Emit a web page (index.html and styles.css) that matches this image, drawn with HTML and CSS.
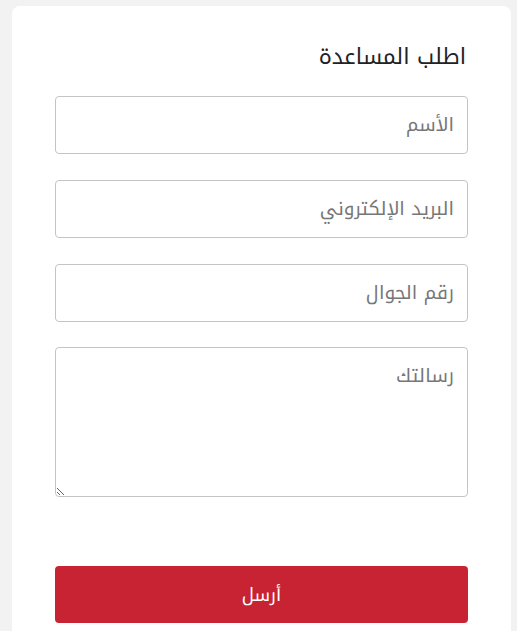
FILE: index.html
```html
<!DOCTYPE html>
<html lang="ar" dir="rtl">
<head>
<meta charset="utf-8">
<link rel="stylesheet" href="styles.css">
</head>
<body>
<div class="card">
  <h2 class="title">اطلب المساعدة</h2>
  <form class="form">
    <input class="field" type="text" dir="rtl" placeholder="الأسم">
    <input class="field" type="email" dir="rtl" placeholder="البريد الإلكتروني">
    <input class="field field-last" type="tel" dir="rtl" placeholder="رقم الجوال">
    <textarea class="field area" dir="rtl" placeholder="رسالتك"></textarea>
    <button class="submit" type="button">أرسل</button>
  </form>
</div>
</body>
</html>
```
FILE: styles.css
```css
html, body {
  margin: 0;
  padding: 0;
  background: #f2f2f2;
}
body {
  padding: 6px 6px 0 12px;
  font-family: "Noto Kufi Arabic", "Noto Sans Arabic", "Noto Sans", "DejaVu Sans", sans-serif;
  height: 631px;
  box-sizing: border-box;
  overflow: hidden;
}
.card {
  background: #fff;
  border-radius: 8px 8px 0 0;
  padding: 38px 45px 0 43px;
  height: 625px;
  box-sizing: border-box;
}
.title {
  margin: 0 0 26px;
  font-size: 22px;
  font-weight: 400;
  color: #222;
  line-height: 26px;
}
.form {
  display: flex;
  flex-direction: column;
  margin-left: 0;
  margin-right: -2px;
}
.field {
  height: 58px;
  border: 1px solid #c4c4c4;
  border-radius: 4px;
  padding: 0 13px;
  font-family: inherit;
  font-size: 19px;
  color: #333;
  background: #fff;
  margin-bottom: 26px;
  box-sizing: border-box;
  outline: none;
  text-align: right;
}
.field-last {
  margin-bottom: 25px;
}
.field::placeholder {
  color: #777;
}
.area {
  height: 150px;
  padding-top: 10px;
  resize: vertical;
  margin-bottom: 69px;
}
.submit {
  height: 57px;
  border: 0;
  border-radius: 4px;
  background: #c82333;
  color: #fff;
  font-family: inherit;
  font-size: 18px;
}
```
